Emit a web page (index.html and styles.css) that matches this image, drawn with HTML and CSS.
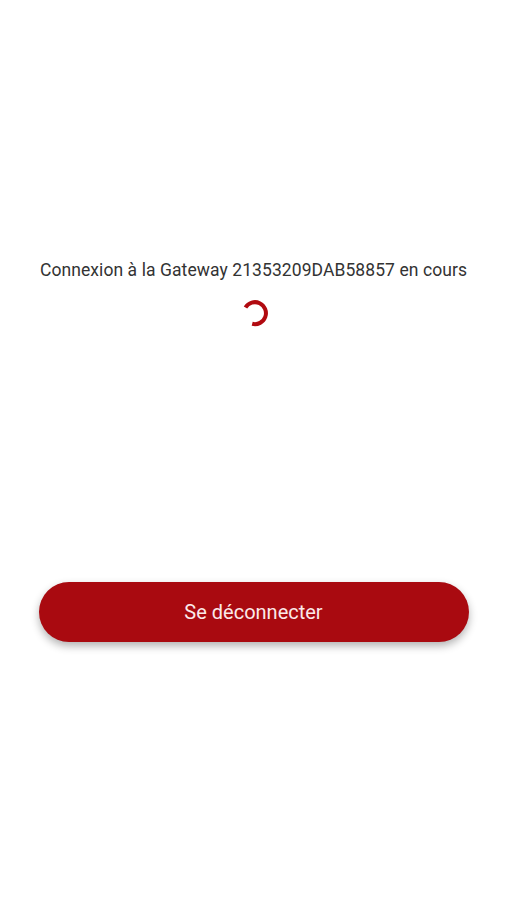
FILE: index.html
```html
<!DOCTYPE html>
<html lang="fr">
<head>
    <meta charset="UTF-8">
    <meta name="viewport" content="width=device-width, initial-scale=1.0">
    <title>Connexion</title>
    <link rel="stylesheet" href="styles.css">
</head>
<body>
    <div class="screen">
        <div class="status">
            <p class="status-text">Connexion à la Gateway 21353209DAB58857 en cours</p>
            <svg class="spinner" width="30" height="30" viewBox="0 0 30 30">
                <path d="M6.5 9.5 A11 11 0 1 1 13.2 25.8" fill="none" stroke="#b10a10" stroke-width="4"/>
            </svg>
        </div>
        <button class="logout">Se déconnecter</button>
    </div>
</body>
</html>
```

FILE: styles.css
```css
body {
    margin: 0;
    font-family: Roboto, "Noto Sans", Arial, sans-serif;
    background-color: #ffffff;
}
.screen {
    display: flex;
    flex-direction: column;
    align-items: center;
    height: 900px;
    padding-top: 258px;
    box-sizing: border-box;
}
.status {
    display: flex;
    flex-direction: column;
    align-items: center;
}
.status-text {
    margin: 0;
    font-size: 17.5px;
    line-height: 24px;
    letter-spacing: 0.08px;
    color: #333333;
    white-space: nowrap;
}
.spinner {
    margin-top: 16px;
}
.logout {
    margin-top: 254px;
    width: 430px;
    height: 60px;
    border: none;
    border-radius: 30px;
    background-color: #a90a10;
    color: #fbe9e9;
    font-family: inherit;
    font-size: 20px;
    box-shadow: 0 4px 9px rgba(0,0,0,0.3);
    cursor: pointer;
}
```
